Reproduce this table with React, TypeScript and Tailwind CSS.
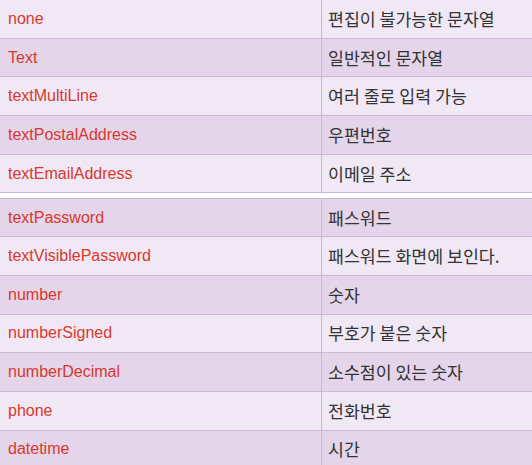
import type { FC } from "react";

type Row = { key: string; desc: string };

const groupA: Row[] = [
    { key: "none", desc: "편집이 불가능한 문자열" },
    { key: "Text", desc: "일반적인 문자열" },
    { key: "textMultiLine", desc: "여러 줄로 입력 가능" },
    { key: "textPostalAddress", desc: "우편번호" },
    { key: "textEmailAddress", desc: "이메일 주소" },
];

const groupB: Row[] = [
    { key: "textPassword", desc: "패스워드" },
    { key: "textVisiblePassword", desc: "패스워드 화면에 보인다." },
    { key: "number", desc: "숫자" },
    { key: "numberSigned", desc: "부호가 붙은 숫자" },
    { key: "numberDecimal", desc: "소수점이 있는 숫자" },
    { key: "phone", desc: "전화번호" },
    { key: "datetime", desc: "시간" },
];

const TableRow: FC<{ row: Row; index: number; topBorder?: boolean }> = ({ row, index, topBorder }) => {
    const bg = index % 2 === 0 ? "bg-[#f1e8f5]" : "bg-[#e4d5ea]";
    return (
        <div
            className={`flex h-[38.7px] border-b border-[#cbb8d9] ${bg} ${topBorder ? "border-t" : ""}`}
        >
            <div className="w-[322px] shrink-0 flex items-center pl-[8px] border-r border-[#cbb8d9] text-[16px] text-[#d8392c] font-['Liberation_Sans',Arial,sans-serif]">
                {row.key}
            </div>
            <div className="flex-1 flex items-center pl-[6px] text-[17.3px] text-[#333333] font-['Noto_Sans_CJK_KR','Noto_Sans',sans-serif]">
                {row.desc}
            </div>
        </div>
    );
};

const App: FC = () => {
    return (
        <div className="w-[532px] h-[465px] overflow-hidden bg-white">
            <div>
                {groupA.map((row, i) => (
                    <TableRow key={row.key} row={row} index={i} />
                ))}
            </div>
            <div className="mt-[5px]">
                {groupB.map((row, i) => (
                    <TableRow key={row.key} row={row} index={i + 1} topBorder={i === 0} />
                ))}
            </div>
        </div>
    );
};

export default App;
